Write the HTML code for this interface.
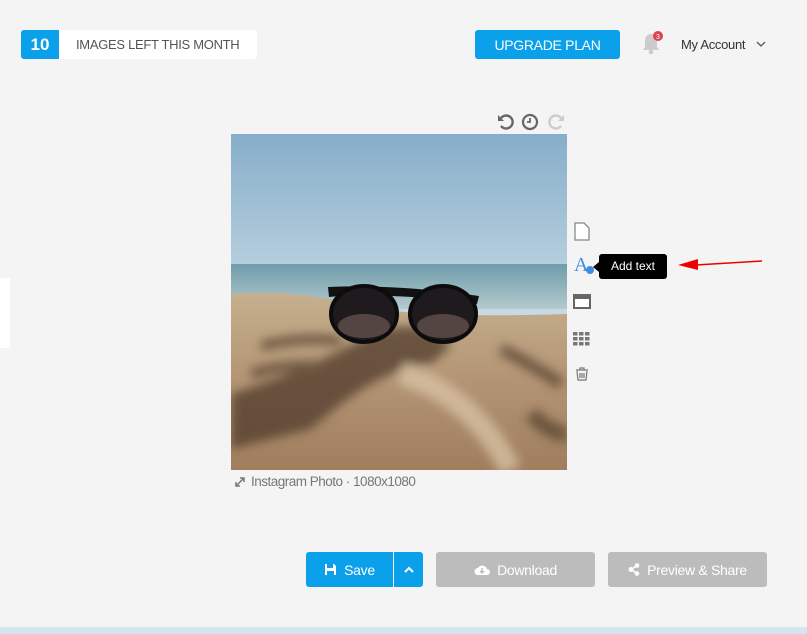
<!DOCTYPE html>
<html><head><meta charset="utf-8"><style>
body{margin:0;width:807px;height:634px;background:#f4f4f4;font-family:"Liberation Sans",sans-serif;position:relative;overflow:hidden}
.a{position:absolute}
.btn{position:absolute;border-radius:3px;color:#fff;font-size:14px;display:flex;align-items:center;justify-content:center;gap:7px;letter-spacing:-0.3px}
</style></head><body>
<div class="a" style="left:21px;top:30px;width:236px;height:29px;background:#fff;border-radius:3px"></div>
<div class="a" style="left:21px;top:30px;width:38px;height:29px;background:#0aa0ea;border-radius:3px 0 0 3px;color:#fff;font-weight:bold;font-size:17px;line-height:29px;text-align:center">10</div>
<div class="a" style="left:76px;top:30px;line-height:29px;font-size:13px;color:#555;letter-spacing:-0.3px">IMAGES LEFT THIS MONTH</div>
<div class="btn" style="left:475px;top:30px;width:145px;height:29px;background:#0aa0ea;font-size:14px">UPGRADE PLAN</div>
<svg class="a" style="left:638px;top:30px" width="30" height="28" viewBox="0 0 30 28"><path d="M13 4c-4 0-6 3-6 7v6l-2 3h16l-2-3v-6c0-4-2-7-6-7z" fill="#ccc"/><circle cx="13" cy="22" r="2.3" fill="#ccc"/><circle cx="20" cy="6" r="5" fill="#d9434f"/><text x="20" y="9" font-size="7" fill="#fff" text-anchor="middle" font-family="Liberation Sans">3</text></svg>
<div class="a" style="left:681px;top:37px;font-size:13px;color:#333;letter-spacing:-0.3px">My Account</div>
<svg class="a" style="left:756px;top:41px" width="10" height="7"><path d="M1 1l4 4 4-4" stroke="#555" fill="none" stroke-width="1.3"/></svg>
<svg class="a" style="left:496px;top:112px" width="70" height="20" viewBox="0 0 70 20"><path d="M5 6a6.5 6.5 0 1 1 0 8" stroke="#666" stroke-width="2.4" fill="none"/><path d="M2 3v6h6z" fill="#666"/><circle cx="34" cy="10" r="7" stroke="#666" stroke-width="2.2" fill="none"/><path d="M34 6v4h-3" stroke="#666" stroke-width="1.8" fill="none"/><path d="M65 6a6.5 6.5 0 1 0 0 8" stroke="#ccc" stroke-width="2.4" fill="none"/><path d="M68 3v6h-6z" fill="#ccc"/></svg>
<svg class="a" style="left:231px;top:134px" width="336" height="336" viewBox="0 0 336 336">
<defs><linearGradient id="sky" x1="0" y1="0" x2="0" y2="1"><stop offset="0" stop-color="#86aeca"/><stop offset="0.55" stop-color="#c9dbe5"/><stop offset="1" stop-color="#e3eaec"/></linearGradient>
<linearGradient id="sea" x1="0" y1="0" x2="0" y2="1"><stop offset="0" stop-color="#6f9cab"/><stop offset="1" stop-color="#b3cacd"/></linearGradient>
<linearGradient id="sand" x1="0" y1="0" x2="0" y2="1"><stop offset="0" stop-color="#c6b08f"/><stop offset="0.5" stop-color="#b39474"/><stop offset="1" stop-color="#9f7e5e"/></linearGradient>
<filter id="bl"><feGaussianBlur stdDeviation="5"/></filter></defs>
<rect width="336" height="336" fill="url(#sky)"/>
<rect y="130" width="336" height="45" fill="url(#sea)"/>
<path d="M0 160 Q60 155 120 170 T336 180 V336 H0z" fill="url(#sand)"/>
<g filter="url(#bl)" opacity="0.75"><path d="M0 260 Q80 235 140 200 Q190 180 220 212 L200 230 Q150 232 80 295 L0 315z" fill="#4f3b29"/><path d="M30 212 Q70 202 110 207" stroke="#5a4430" stroke-width="10" fill="none"/><path d="M20 240 Q50 230 90 232" stroke="#5a4430" stroke-width="10" fill="none"/><path d="M270 215 Q300 230 330 250" stroke="#5a4430" stroke-width="12" fill="none"/><path d="M300 280 Q320 300 336 300" stroke="#5a4430" stroke-width="16" fill="none"/><path d="M170 240 Q240 260 280 336" stroke="#d9c4a6" stroke-width="22" fill="none"/></g>
<path d="M97 153 Q165 150 248 162 L246 170 Q230 165 160 162 Q120 160 98 163z" fill="#111"/>
<ellipse cx="133" cy="180" rx="33" ry="28" fill="#1e1a1d" stroke="#0c0c0c" stroke-width="4"/>
<ellipse cx="212" cy="180" rx="33" ry="28" fill="#1e1a1d" stroke="#0c0c0c" stroke-width="4"/>
<ellipse cx="133" cy="192" rx="26" ry="12" fill="#7a625c" opacity="0.6"/>
<ellipse cx="212" cy="192" rx="26" ry="12" fill="#7a625c" opacity="0.6"/>
</svg>
<svg class="a" style="left:234px;top:476px" width="12" height="12"><path d="M2 10l8-8M6 2h4v4M2 6v4h4" stroke="#777" stroke-width="1.5" fill="none"/></svg>
<div class="a" style="left:251px;top:474px;font-size:13.5px;color:#777;letter-spacing:-0.5px">Instagram Photo · 1080x1080</div>
<svg class="a" style="left:572px;top:220px" width="20" height="170" viewBox="0 0 20 170">
<path d="M3 3h9l5 5v12H3z" fill="#fff" stroke="#888" stroke-width="1.3"/>
<rect x="2" y="75" width="16" height="13" fill="#fff" stroke="#666" stroke-width="2"/><rect x="2" y="75" width="16" height="4" fill="#666"/>
<g fill="#777"><rect x="1" y="112" width="4.5" height="3.5"/><rect x="7" y="112" width="4.5" height="3.5"/><rect x="13" y="112" width="4.5" height="3.5"/><rect x="1" y="117" width="4.5" height="3.5"/><rect x="7" y="117" width="4.5" height="3.5"/><rect x="13" y="117" width="4.5" height="3.5"/><rect x="1" y="122" width="4.5" height="3.5"/><rect x="7" y="122" width="4.5" height="3.5"/><rect x="13" y="122" width="4.5" height="3.5"/></g>
<path d="M4 150h12M8 150v-2h4v2M5 151l1 9h8l1-9M8 153v5M10 153v5M12 153v5" stroke="#777" stroke-width="1.2" fill="none"/>
</svg>
<div class="a" style="left:574px;top:254px;font-family:'Liberation Serif',serif;font-size:20px;color:#3b8fe0">A</div>
<div class="a" style="left:586px;top:266px;width:8px;height:8px;border-radius:50%;background:#3b8fe0"></div>
<div class="a" style="left:599px;top:254px;width:68px;height:25px;background:#000;border-radius:3px;color:#fff;font-size:12px;line-height:25px;text-align:center">Add text</div>
<div class="a" style="left:593px;top:262px;width:0;height:0;border:5px solid transparent;border-right:6px solid #000;border-left:0"></div>
<svg class="a" style="left:676px;top:256px" width="90" height="16"><path d="M20 9L86 5" stroke="#e00" stroke-width="1.5"/><path d="M2 9l20-6v11z" fill="#e00"/></svg>
<div class="a" style="left:0;top:278px;width:10px;height:70px;background:#fff"></div>
<div class="btn" style="left:306px;top:552px;width:87px;height:35px;background:#0aa0ea;border-radius:3px 0 0 3px"><svg width="13" height="13"><path d="M1 1h9l2 2v9H1z" fill="#fff"/><rect x="3" y="1" width="6" height="4" fill="#0aa0ea"/><rect x="3" y="8" width="7" height="4" fill="#0aa0ea"/></svg>Save</div>
<div class="btn" style="left:394px;top:552px;width:29px;height:35px;background:#0aa0ea;border-radius:0 3px 3px 0"><svg width="10" height="7"><path d="M1 6l4-4 4 4" stroke="#fff" stroke-width="2" fill="none"/></svg></div>
<div class="btn" style="left:436px;top:552px;width:159px;height:35px;background:#bcbcbc"><svg width="16" height="12"><path d="M4 11a3.5 3.5 0 0 1 0-7a5 5 0 0 1 9 1a3 3 0 0 1 0 6z" fill="#fff"/><path d="M8 4v5M6 7l2 2 2-2" stroke="#bcbcbc" stroke-width="1.4" fill="none"/></svg>Download</div>
<div class="btn" style="left:608px;top:552px;width:159px;height:35px;background:#bcbcbc"><svg width="12" height="13"><circle cx="9" cy="2.5" r="2.3" fill="#fff"/><circle cx="9" cy="10.5" r="2.3" fill="#fff"/><circle cx="3" cy="6.5" r="2.5" fill="#fff"/><path d="M3 6.5L9 2.5M3 6.5L9 10.5" stroke="#fff" stroke-width="1.5"/></svg>Preview &amp; Share</div>
<div class="a" style="left:0;top:627px;width:807px;height:7px;background:#d6e4ee"></div>
</body></html>
